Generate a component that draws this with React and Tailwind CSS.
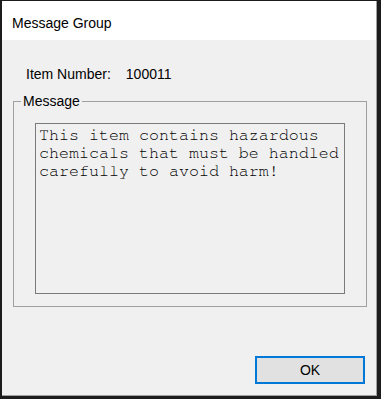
export default function App() {
  return (
    <div className="w-[381px] h-[399px] bg-[#1c1c1c] pt-px pl-[2px] pr-[4px] pb-[3px] font-['Liberation_Sans',Arial,sans-serif] text-[14px] text-black">
      <div className="h-full flex flex-col bg-[#f0f0f0] border-r border-b border-[#a0a0a0]">
        {/* title bar */}
        <div className="h-[39px] shrink-0 bg-white pl-[10px] pt-[14px] leading-[16px]">Message Group</div>

        <div className="flex-1 flex flex-col">
          <div className="mt-[26px] pl-[24px] flex gap-[15px] leading-[16px]">
            <span>Item Number:</span>
            <span>100011</span>
          </div>

          <fieldset className="mt-[11px] ml-[11px] w-[354px] border border-[#a0a0a0] pb-[12px]">
            <legend className="ml-[7px] px-[2px] leading-[16px]">Message</legend>
            <textarea
              readOnly
              value="This item contains hazardous chemicals that must be handled carefully to avoid harm!"
              className="mt-[14px] ml-[21px] block w-[310px] h-[171px] resize-none overflow-hidden border border-[#7a7a7a] bg-[#f0f0f0] pl-[3px] pr-[2px] pt-[2px] font-['Nimbus_Mono_PS','FreeMono','Courier_New','Liberation_Mono',monospace] text-[16.67px] leading-[18px] text-black outline-none"
            />
          </fieldset>

          <div className="flex-1" />
          <div className="flex justify-end pr-[11px] pb-[11px]">
            <button className="w-[110px] h-[28px] border-2 border-[#0078d7] bg-[#e1e1e1] leading-[16px]">OK</button>
          </div>
        </div>
      </div>
    </div>
  )
}
